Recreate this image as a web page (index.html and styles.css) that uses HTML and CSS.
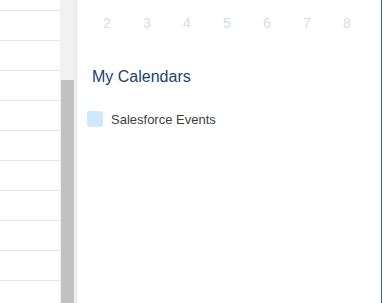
FILE: index.html
```html
<!DOCTYPE html>
<html>
<head>
<meta charset="utf-8">
<link rel="stylesheet" href="styles.css">
</head>
<body>
<div class="app">
  <div class="grid-pane">
    <div class="rows">
      <div class="row"></div><div class="row"></div><div class="row"></div>
      <div class="row"></div><div class="row"></div><div class="row"></div>
      <div class="row"></div><div class="row"></div><div class="row"></div>
      <div class="row"></div><div class="row"></div>
    </div>
    <div class="scroll-track"><div class="scroll-thumb"></div></div>
  </div>
  <div class="side">
    <div class="week">
      <span class="day">2</span><span class="day">3</span><span class="day">4</span><span class="day">5</span><span class="day">6</span><span class="day">7</span><span class="day">8</span>
    </div>
    <h2 class="heading">My Calendars</h2>
    <div class="cal-item">
      <span class="swatch"></span>
      <span class="cal-name">Salesforce Events</span>
    </div>
  </div>
</div>
</body>
</html>
```
FILE: styles.css
```css
html, body {
  margin: 0;
  padding: 0;
  background: #fff;
  overflow: hidden;
}
.app {
  display: flex;
  width: 382px;
  height: 303px;
  overflow: hidden;
  font-family: "Liberation Sans", Arial, sans-serif;
}
.grid-pane {
  display: flex;
  width: 76px;
  flex: none;
  overflow: hidden;
  border-right: 1px solid #e4e3ee;
}
.rows {
  width: 60px;
  flex: none;
  margin-top: -19px;
}
.row {
  height: 29px;
  border-bottom: 1px solid #e6e6e6;
}
.scroll-track {
  width: 16px;
  flex: none;
  background: #f1f1f1;
  padding-top: 80px;
  box-sizing: border-box;
}
.scroll-thumb {
  margin-left: 1px;
  width: 13px;
  height: 223px;
  background: #c1c1c1;
}
.side {
  flex: 1;
  border-right: 1px solid #1b5f9c;
  padding-left: 10px;
}
.week {
  display: flex;
  height: 45px;
  align-items: center;
}
.day {
  width: 40px;
  text-align: center;
  font-size: 14px;
  color: #d8dde6;
}
.heading {
  margin: 22px 0 0 5px;
  font-size: 16px;
  font-weight: normal;
  color: #1b3f70;
  line-height: 20px;
}
.cal-item {
  display: flex;
  align-items: center;
  margin-top: 24px;
}
.swatch {
  width: 16px;
  height: 16px;
  border-radius: 3px;
  background: #cfe9fe;
  margin-right: 8px;
}
.cal-name {
  font-size: 13px;
  color: #3e3e3c;
}
```
